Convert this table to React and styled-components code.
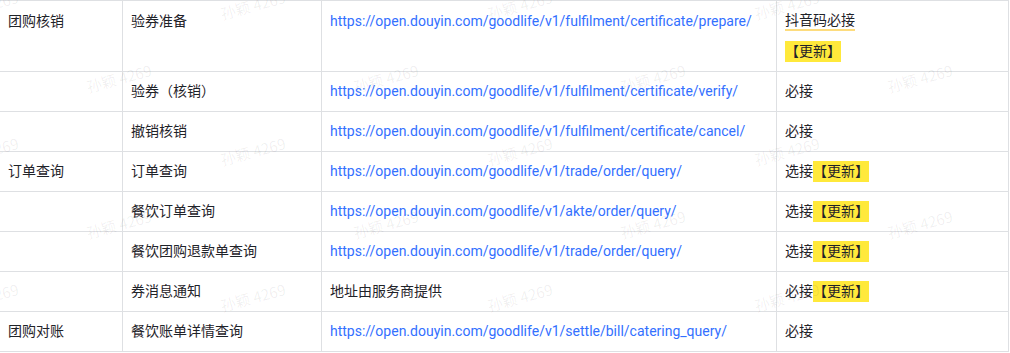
import React from "react";
import styled, { createGlobalStyle } from "styled-components";

const GlobalStyle = createGlobalStyle`
  html, body { margin: 0; padding: 0; background: #ffffff; }
  body {
    font-family: Roboto, "Noto Sans CJK SC", sans-serif;
    font-size: 14px;
    color: #1f2329;
    overflow: hidden;
  }
`;

const Page = styled.div`
  position: relative;
  width: 1010px;
  height: 353px;
  overflow: hidden;
  background: #ffffff;
`;

const Table = styled.div`
  display: grid;
  grid-template-columns: 123px 199px 455px 232px;
  width: 1010px;
  margin-left: -1px;
  box-sizing: border-box;
  border-top: 1px solid #dee0e3;
  border-left: 1px solid #dee0e3;
`;

const Cell = styled.div`
  box-sizing: border-box;
  border-right: 1px solid #dee0e3;
  border-bottom: 1px solid #dee0e3;
  padding: ${(p) => (p.$first ? "9px 8px 9px" : "8px 8px 9px")};
  line-height: 22px;
  font-size: 14px;
  white-space: nowrap;
  display: flex;
  flex-direction: column;
  align-items: flex-start;
  gap: 8px;
`;

const Link = styled.a`
  color: #3370ff;
  text-decoration: none;
`;

const Marked = styled.span`
  display: inline-block;
  vertical-align: top;
  line-height: 21px;
  height: 21px;
  background: linear-gradient(#fddc7e, #fddc7e) left bottom / 100% 2px no-repeat;
`;

const Highlight = styled.span`
  display: inline-block;
  vertical-align: top;
  margin-top: 1px;
  height: 21px;
  line-height: 20px;
  background: #ffe93b;
`;

const Line = styled.div`
  line-height: 22px;
  height: 22px;
`;

const Watermarks = styled.div`
  position: absolute;
  inset: 0;
  pointer-events: none;
`;

const Mark = styled.span`
  position: absolute;
  transform: translate(-50%, -50%) rotate(-15deg);
  font-family: "Noto Sans CJK SC", Roboto, sans-serif;
  font-size: 15px;
  color: rgba(31, 35, 41, 0.07);
  white-space: nowrap;
  user-select: none;
`;

const rows = [
  {
    group: "团购核销",
    name: "验券准备",
    url: "https://open.douyin.com/goodlife/v1/fulfilment/certificate/prepare/",
    req: "抖音码必接",
    first: true,
  },
  { group: "", name: "验券（核销）", url: "https://open.douyin.com/goodlife/v1/fulfilment/certificate/verify/", req: "必接" },
  { group: "", name: "撤销核销", url: "https://open.douyin.com/goodlife/v1/fulfilment/certificate/cancel/", req: "必接" },
  { group: "订单查询", name: "订单查询", url: "https://open.douyin.com/goodlife/v1/trade/order/query/", req: "选接", updated: true },
  { group: "", name: "餐饮订单查询", url: "https://open.douyin.com/goodlife/v1/akte/order/query/", req: "选接", updated: true },
  { group: "", name: "餐饮团购退款单查询", url: "https://open.douyin.com/goodlife/v1/trade/order/query/", req: "选接", updated: true },
  { group: "", name: "券消息通知", text: "地址由服务商提供", req: "必接", updated: true },
  { group: "团购对账", name: "餐饮账单详情查询", url: "https://open.douyin.com/goodlife/v1/settle/bill/catering_query/", req: "必接" },
];

const marks = [];
for (let r = 0; r < 5; r++) {
  const y = 5 + r * 73;
  const x0 = r % 2 === 0 ? -14 : 119;
  for (let k = 0; k < 4; k++) marks.push({ x: x0 + k * 267, y });
}

export default function App() {
  return (
    <Page>
      <GlobalStyle />
      <Table>
        {rows.map((r, i) => (
          <React.Fragment key={i}>
            <Cell $first={r.first}>{r.group}</Cell>
            <Cell $first={r.first}>{r.name}</Cell>
            <Cell $first={r.first}>
              {r.url ? <Link href={r.url}>{r.url}</Link> : r.text}
            </Cell>
            <Cell $first={r.first}>
              {r.first ? (
                <>
                  <Line>
                    <Marked>{r.req}</Marked>
                  </Line>
                  <Line>
                    <Highlight>【更新】</Highlight>
                  </Line>
                </>
              ) : (
                <Line>
                  {r.req}
                  {r.updated && <Highlight>【更新】</Highlight>}
                </Line>
              )}
            </Cell>
          </React.Fragment>
        ))}
      </Table>
      <Watermarks>
        {marks.map((m, i) => (
          <Mark key={i} style={{ left: m.x, top: m.y }}>
            孙颖 4269
          </Mark>
        ))}
      </Watermarks>
    </Page>
  );
}
